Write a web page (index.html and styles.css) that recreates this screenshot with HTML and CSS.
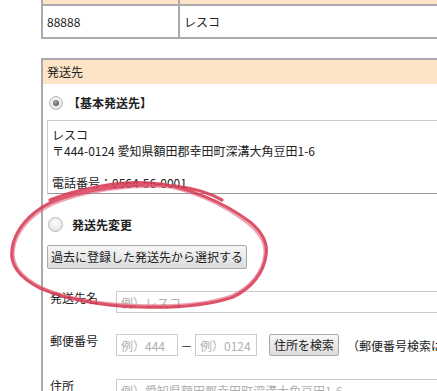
FILE: index.html
```html
<!DOCTYPE html>
<html lang="ja">
<head>
<meta charset="utf-8">
<title>発送先</title>
<link rel="stylesheet" href="styles.css">
</head>
<body>
<div class="page">
  <div class="member">
    <div class="mh"></div>
    <div class="mh mh-right"></div>
    <div class="mc">88888</div>
    <div class="mc mc-right">レスコ</div>
  </div>

  <section class="panel">
    <h2 class="panel-head">発送先</h2>
    <div class="panel-body">
      <label class="radio-row radio-row-first">
        <span class="radio checked"></span>
        <span class="radio-label label-basic">【基本発送先】</span>
      </label>
      <div class="addr-box">
        <div>レスコ</div>
        <div>〒444-0124 愛知県額田郡幸田町深溝大角豆田1-6</div>
        <div>&nbsp;</div>
        <div>電話番号：0564-56-0001</div>
      </div>
      <label class="radio-row radio-row-second">
        <span class="radio"></span>
        <span class="radio-label label-change">発送先変更</span>
      </label>
      <button class="btn btn-history" type="button">過去に登録した発送先から選択する</button>

      <div class="form">
        <div class="frow frow-name">
          <span class="flabel">発送先名</span>
          <input class="finput finput-wide" type="text" placeholder="例）レスコ">
        </div>
        <div class="frow frow-zip">
          <span class="flabel">郵便番号</span>
          <div class="zip">
            <input class="finput finput-zip" type="text" placeholder="例）444">
            <span class="dash">－</span>
            <input class="finput finput-zip" type="text" placeholder="例）0124">
            <button class="btn btn-search" type="button">住所を検索</button>
            <span class="note">（郵便番号検索は住所の一部が自動入力されます）</span>
          </div>
        </div>
        <div class="frow frow-addr">
          <span class="flabel">住所</span>
          <input class="finput finput-wide" type="text" placeholder="例）愛知県額田郡幸田町深溝大角豆田1-6">
        </div>
      </div>
    </div>
  </section>
</div>

<svg class="scribble" width="437" height="391" viewBox="0 0 437 391" aria-hidden="true">
  <path class="stroke-a" d="M50 200 C80 188 120 181 150 183 C185 185 225 203 250 222 C262 232 268 243 266 255 C264 272 252 288 233 297 C210 305 175 308 140 307 C100 306 62 298 40 288 C20 278 10 265 12 250 C14 230 30 213 50 203 C80 190 130 182 175 186 C200 189 215 196 222 200"/>
  <path class="stroke-b" d="M52 202 C82 190 121 183 151 185 C186 187 224 205 248 224 C260 234 266 245 264 256 C262 272 250 287 232 295 C209 303 175 306 140 305 C101 304 63 297 42 287 C22 277 12 264 14 250 C16 231 32 215 52 205 C82 192 131 184 176 188"/>
</svg>
</body>
</html>
```

FILE: styles.css
```css
html, body {
  margin: 0;
  padding: 0;
  background: #ffffff;
}

body {
  position: relative;
  width: 437px;
  height: 391px;
  overflow: hidden;
  font-family: "Noto Sans CJK JP", "Noto Sans", sans-serif;
  font-size: 12px;
  color: #222222;
}

.page {
  padding-left: 41px;
  width: 700px;
}

/* top table (cut off) */
.member {
  margin-top: -24px;
  width: 640px;
  border: 2px solid #aaaaaa;
  display: grid;
  grid-template-columns: 135px 1fr;
}

.mh {
  height: 26px;
  background: #fde4c6;
  border-bottom: 2px solid #aaaaaa;
}

.mh-right,
.mc-right {
  border-left: 2px solid #aaaaaa;
}

.mc {
  height: 31px;
  line-height: 31px;
  padding: 0 4px;
}

/* panel */
.panel {
  margin-top: 19px;
  width: 640px;
  border: 2px solid #aaaaaa;
  border-bottom: none;
}

.panel-head {
  margin: 0;
  height: 24px;
  line-height: 24px;
  padding-left: 4px;
  background: #fde4c6;
  font-size: 12px;
  font-weight: normal;
}

.panel-body {
  padding-left: 4px;
  padding-bottom: 40px;
}

.radio-row {
  display: flex;
  align-items: center;
}

.radio-row-first {
  height: 36px;
  padding-top: 1px;
  box-sizing: border-box;
}

.radio-row-second {
  margin-top: 15px;
  height: 30px;
}

.radio {
  width: 14px;
  height: 14px;
  box-sizing: border-box;
  border-radius: 50%;
  border: 1px solid #b9b9b9;
  background: radial-gradient(circle at 50% 40%, #fdfdfd 0%, #ececec 55%, #d6d6d6 100%);
  display: flex;
  align-items: center;
  justify-content: center;
  margin-left: 2px;
}

.radio-row-second .radio {
  width: 15px;
  height: 15px;
  margin-left: 1px;
}

.radio.checked::after {
  content: "";
  width: 6px;
  height: 6px;
  border-radius: 50%;
  background: radial-gradient(circle at 40% 35%, #a8a8a8 0%, #6a6a6a 60%, #4c4c4c 100%);
}

.radio-label {
  font-weight: bold;
}

.label-basic {
  margin-left: 5px;
}

.label-change {
  margin-left: 9px;
}

.addr-box {
  width: 560px;
  border: 1px solid #cccccc;
  border-bottom-color: #9a9a9a;
  padding: 6px 4px 2px;
  line-height: 16px;
}

.btn {
  font-family: "Noto Sans CJK JP", "Noto Sans", sans-serif;
  font-size: 12px;
  color: #222222;
  border: 1px solid #a9a9a9;
  border-radius: 2px;
  background: linear-gradient(#f7f7f7, #e9e9e9 50%, #dcdcdc);
  padding: 0 3px;
  line-height: 20px;
  cursor: pointer;
}

.btn-history {
  display: block;
  margin-top: 6px;
  height: 24px;
}

.form {
  margin-top: 22px;
}

.frow {
  display: grid;
  grid-template-columns: 69px 1fr;
  align-items: start;
}

.frow-name {
  margin-bottom: 21px;
}

.frow-zip {
  margin-bottom: 23px;
}

.flabel {
  padding-left: 3px;
  line-height: 14px;
  padding-top: 0;
  white-space: nowrap;
}

.finput {
  box-sizing: border-box;
  height: 22px;
  border: 1px solid #cccccc;
  padding: 0 4px;
  font-family: "Noto Sans CJK JP", "Noto Sans", sans-serif;
  font-size: 12px;
  color: #222222;
  background: #ffffff;
  outline: none;
}

.finput::placeholder {
  color: #b0b0b0;
}

.finput-wide {
  width: 420px;
}

.finput-zip {
  width: 62px;
}

.zip {
  display: flex;
  align-items: center;
  white-space: nowrap;
}

.dash {
  width: 17px;
  text-align: center;
}

.btn-search {
  margin-left: 12px;
  height: 22px;
  padding: 0 4px;
}

.note {
  margin-left: 8px;
}

/* hand-drawn annotation */
.scribble {
  position: absolute;
  left: 0;
  top: 0;
  pointer-events: none;
}

.scribble path {
  fill: none;
  stroke-linecap: round;
  stroke-linejoin: round;
}

.stroke-a {
  stroke: #d6344e;
  stroke-width: 3.2;
  opacity: 0.85;
}

.stroke-b {
  stroke: #e2627c;
  stroke-width: 1.8;
  opacity: 0.6;
}
```
